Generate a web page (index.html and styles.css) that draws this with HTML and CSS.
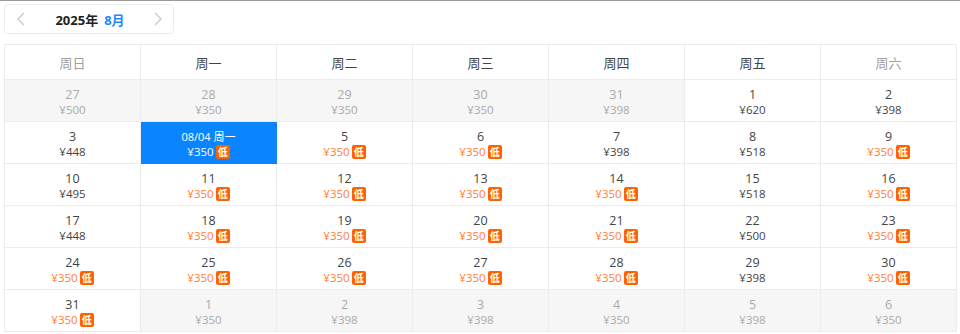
FILE: index.html
```html
<!DOCTYPE html>
<html lang="zh">
<head>
<meta charset="utf-8">
<link rel="stylesheet" href="styles.css">
</head>
<body>
<div class="topline"></div>
<div class="page">
  <div class="nav">
    <span class="arrow"><svg width="8" height="14" viewBox="0 0 8 14"><path d="M7 1 L1 7 L7 13" fill="none" stroke="#c8c8c8" stroke-width="1.3"/></svg></span>
    <span class="title"><b class="year">2025年</b><b class="month">8月</b></span>
    <span class="arrow"><svg width="8" height="14" viewBox="0 0 8 14"><path d="M1 1 L7 7 L1 13" fill="none" stroke="#c8c8c8" stroke-width="1.3"/></svg></span>
  </div>
  <div class="cal">
    <div class="hd weekend">周日</div><div class="hd">周一</div><div class="hd">周二</div><div class="hd">周三</div><div class="hd">周四</div><div class="hd">周五</div><div class="hd weekend">周六</div>

    <div class="c other"><div class="d">27</div><div class="p">¥500</div></div>
    <div class="c other"><div class="d">28</div><div class="p">¥350</div></div>
    <div class="c other"><div class="d">29</div><div class="p">¥350</div></div>
    <div class="c other"><div class="d">30</div><div class="p">¥350</div></div>
    <div class="c other"><div class="d">31</div><div class="p">¥398</div></div>
    <div class="c"><div class="d">1</div><div class="p">¥620</div></div>
    <div class="c"><div class="d">2</div><div class="p">¥398</div></div>

    <div class="c"><div class="d">3</div><div class="p">¥448</div></div>
    <div class="c sel"><div class="d">08/04 周一</div><div class="p low">¥350<i>低</i></div></div>
    <div class="c"><div class="d">5</div><div class="p low">¥350<i>低</i></div></div>
    <div class="c"><div class="d">6</div><div class="p low">¥350<i>低</i></div></div>
    <div class="c"><div class="d">7</div><div class="p">¥398</div></div>
    <div class="c"><div class="d">8</div><div class="p">¥518</div></div>
    <div class="c"><div class="d">9</div><div class="p low">¥350<i>低</i></div></div>

    <div class="c"><div class="d">10</div><div class="p">¥495</div></div>
    <div class="c"><div class="d">11</div><div class="p low">¥350<i>低</i></div></div>
    <div class="c"><div class="d">12</div><div class="p low">¥350<i>低</i></div></div>
    <div class="c"><div class="d">13</div><div class="p low">¥350<i>低</i></div></div>
    <div class="c"><div class="d">14</div><div class="p low">¥350<i>低</i></div></div>
    <div class="c"><div class="d">15</div><div class="p">¥518</div></div>
    <div class="c"><div class="d">16</div><div class="p low">¥350<i>低</i></div></div>

    <div class="c"><div class="d">17</div><div class="p">¥448</div></div>
    <div class="c"><div class="d">18</div><div class="p low">¥350<i>低</i></div></div>
    <div class="c"><div class="d">19</div><div class="p low">¥350<i>低</i></div></div>
    <div class="c"><div class="d">20</div><div class="p low">¥350<i>低</i></div></div>
    <div class="c"><div class="d">21</div><div class="p low">¥350<i>低</i></div></div>
    <div class="c"><div class="d">22</div><div class="p">¥500</div></div>
    <div class="c"><div class="d">23</div><div class="p low">¥350<i>低</i></div></div>

    <div class="c"><div class="d">24</div><div class="p low">¥350<i>低</i></div></div>
    <div class="c"><div class="d">25</div><div class="p low">¥350<i>低</i></div></div>
    <div class="c"><div class="d">26</div><div class="p low">¥350<i>低</i></div></div>
    <div class="c"><div class="d">27</div><div class="p low">¥350<i>低</i></div></div>
    <div class="c"><div class="d">28</div><div class="p low">¥350<i>低</i></div></div>
    <div class="c"><div class="d">29</div><div class="p">¥398</div></div>
    <div class="c"><div class="d">30</div><div class="p low">¥350<i>低</i></div></div>

    <div class="c"><div class="d">31</div><div class="p low">¥350<i>低</i></div></div>
    <div class="c other"><div class="d">1</div><div class="p">¥350</div></div>
    <div class="c other"><div class="d">2</div><div class="p">¥398</div></div>
    <div class="c other"><div class="d">3</div><div class="p">¥398</div></div>
    <div class="c other"><div class="d">4</div><div class="p">¥350</div></div>
    <div class="c other"><div class="d">5</div><div class="p">¥398</div></div>
    <div class="c other"><div class="d">6</div><div class="p">¥350</div></div>
  </div>
</div>
</body>
</html>
```
FILE: styles.css
```css
html, body {
  margin: 0;
  padding: 0;
  background: #fff;
  font-family: "Open Sans", "Noto Sans CJK SC", sans-serif;
  color: #333;
}
.topline {
  height: 1px;
  background: #9a9a9a;
}
.page {
  padding: 3px 3px 0 4px;
}
.nav {
  width: 170px;
  height: 30px;
  box-sizing: border-box;
  border: 1px solid #ececec;
  border-radius: 4px;
  display: flex;
  align-items: center;
  justify-content: space-between;
  padding: 0 11px 0 12px;
}
.arrow {
  display: flex;
  align-items: center;
}
.title {
  font-size: 13px;
  display: flex;
  gap: 6px;
  margin-left: 1px;
}
.year { color: #222; font-weight: 700; }
.month { color: #1e88ff; font-weight: 700; }
.cal {
  margin-top: 10px;
  width: 953px;
  display: grid;
  grid-template-columns: repeat(7, 1fr);
  grid-template-rows: 35px repeat(6, 42px);
  border-top: 1px solid #ececec;
  border-left: 1px solid #ececec;
  box-sizing: border-box;
}
.hd, .c {
  border-right: 1px solid #ececec;
  border-bottom: 1px solid #ececec;
}
.hd {
  display: flex;
  align-items: center;
  justify-content: center;
  font-size: 13px;
  color: #444;
}
.hd.weekend { color: #a0a0a0; }
.c {
  display: flex;
  flex-direction: column;
  align-items: center;
  justify-content: center;
  gap: 1px;
  padding-top: 2px;
  background: #fff;
}
.d {
  font-size: 12.5px;
  line-height: 15px;
  color: #444;
}
.p {
  font-size: 11.5px;
  line-height: 14px;
  color: #444;
  display: flex;
  align-items: center;
  gap: 2px;
}
.p.low { color: #ff7d33; }
.p i {
  font-style: normal;
  background: #ff6200;
  color: #fff;
  font-size: 10px;
  line-height: 14px;
  width: 14px;
  height: 14px;
  text-align: center;
  border-radius: 2px;
  font-weight: 700;
}
.c.other { background: #f6f6f6; }
.c.other .d, .c.other .p { color: #aaa; }
.c.sel {
  background: #0a85ff;
  border-color: #0a85ff;
}
.c.sel .d { color: #fff; font-size: 11px; }
.c.sel .p { color: #fff; }
```
